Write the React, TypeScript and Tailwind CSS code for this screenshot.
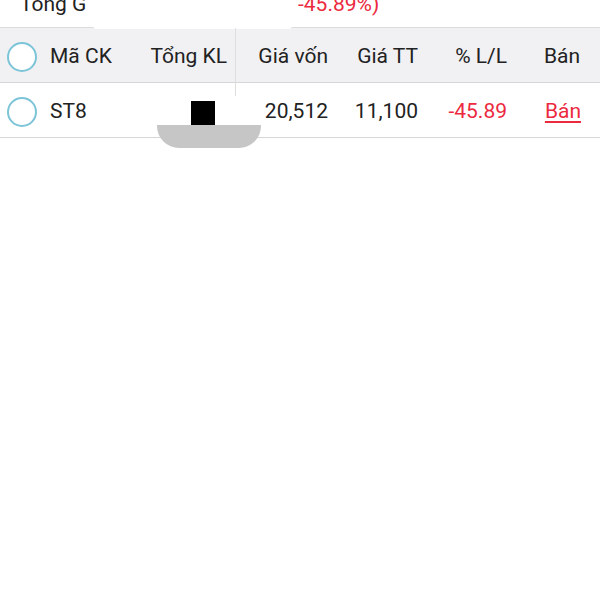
import React from 'react';

const Radio = () => (
  <span className="block w-[30px] h-[30px] rounded-full border-2 border-[#7cc4d8] bg-white" />
);

export default function App() {
  return (
    <div
      className="relative w-[600px] h-[600px] bg-white text-[21px] text-[#222]"
      style={{ fontFamily: 'Roboto, "Noto Sans", sans-serif' }}
    >
      {/* summary strip, cut off at top */}
      <div className="relative h-[28px] border-b border-[#dcdcdc] overflow-hidden">
        <div className="flex -mt-[6px] leading-[21px]">
          <span className="ml-[20px] w-[278px]">Tổng G</span>
          <span className="text-[#ec2a3f]">-45.89%)</span>
        </div>
      </div>
      <div className="absolute left-[93px] top-0 w-[199px] h-[29px] bg-white rounded-b-[4px]" />

      {/* header */}
      <div className="flex items-center h-[55px] pt-[3px] bg-[#f1f1f3] border-b border-[#d6d6d6]">
        <div className="flex items-center w-[140px] pl-[7px] gap-[13px]">
          <Radio />
          <span>Mã CK</span>
        </div>
        <div className="w-[95px] pr-[8px] text-right">Tổng KL</div>
        <div className="w-[101px] pr-[8px] text-right">Giá vốn</div>
        <div className="w-[90px] pr-[8px] text-right">Giá TT</div>
        <div className="w-[89px] pr-[8px] text-right">% L/L</div>
        <div className="w-[78px] pr-[13px] text-right">Bán</div>
      </div>

      {/* row */}
      <div className="flex items-center h-[55px] pt-[3px] border-b border-[#d6d6d6]">
        <div className="flex items-center w-[140px] pl-[7px] gap-[13px]">
          <Radio />
          <span>ST8</span>
        </div>
        <div className="w-[95px] flex justify-end pr-[20px]">
          <span className="block w-[24px] h-[24px] mt-[3px] bg-black" />
        </div>
        <div className="w-[101px] pr-[8px] text-right">20,512</div>
        <div className="w-[90px] pr-[8px] text-right">11,100</div>
        <div className="w-[89px] pr-[8px] text-right text-[#ec2a3f]">-45.89</div>
        <div className="w-[78px] pr-[12px] text-right text-[#ec2a3f] underline underline-offset-[3px]">Bán</div>
      </div>

      {/* column divider */}
      <div className="absolute left-[235px] top-[28px] w-px h-[68px] bg-[#dedede]" />

      {/* drag handle */}
      <div className="absolute left-[157px] top-[125px] w-[104px] h-[23px] bg-[#c6c6c6] rounded-b-[22px]" />
    </div>
  );
}
